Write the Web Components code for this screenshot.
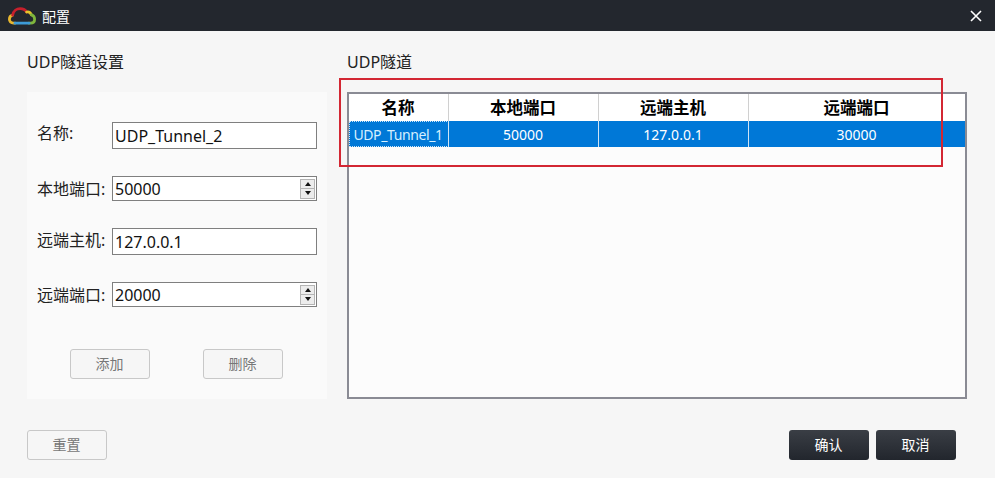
<!DOCTYPE html>
<html lang="zh">
<head>
<meta charset="utf-8">
<title>配置</title>
<style>
  html, body { margin: 0; padding: 0; height: 100%; overflow: hidden; background: #f6f6f6; }
  body { font-family: "Noto Sans", "Noto Sans CJK SC", sans-serif; color: #222; }
</style>
</head>
<body>
<config-dialog>
  <title-bar slot="title">配置</title-bar>

  <section-box slot="left" heading="UDP隧道设置">
    <form-panel>
      <form-row label="名称:" value="UDP_Tunnel_2" height="27" raise="5"></form-row>
      <form-row label="本地端口:" value="50000" height="25" spin></form-row>
      <form-row label="远端主机:" value="127.0.0.1" height="27" raise="3"></form-row>
      <form-row label="远端端口:" value="20000" height="25" spin></form-row>
      <ui-button slot="actions" kind="plain">添加</ui-button>
      <ui-button slot="actions" kind="plain">删除</ui-button>
    </form-panel>
  </section-box>

  <section-box slot="right" heading="UDP隧道">
    <tunnel-table></tunnel-table>
  </section-box>

  <ui-button slot="reset" kind="plain">重置</ui-button>
  <ui-button slot="footer" kind="dark">确认</ui-button>
  <ui-button slot="footer" kind="dark">取消</ui-button>
</config-dialog>

<script>
class ConfigDialog extends HTMLElement {
  constructor() {
    super();
    this.attachShadow({ mode: "open" });
    this.shadowRoot.innerHTML = `
      <style>
        :host { display: flex; flex-direction: column; width: 995px; height: 478px; background: #f6f6f6; }
        .main { display: flex; gap: 20px; padding: 20px 0 0 27px; }
        .left { width: 300px; }
        .right { width: 620px; }
        .bottom { display: flex; justify-content: space-between; padding: 31px 39px 0 27px; }
        .buttons { display: flex; gap: 7px; }
      </style>
      <slot name="title"></slot>
      <div class="main">
        <div class="left"><slot name="left"></slot></div>
        <div class="right"><slot name="right"></slot></div>
      </div>
      <div class="bottom">
        <slot name="reset"></slot>
        <div class="buttons"><slot name="footer"></slot></div>
      </div>
    `;
  }
}

class TitleBar extends HTMLElement {
  constructor() {
    super();
    this.attachShadow({ mode: "open" });
    this.shadowRoot.innerHTML = `
      <style>
        :host { display: flex; align-items: center; height: 31px; background: #23272e; color: #fff; font-size: 14px; padding: 0 13px 0 8px; }
        .logo { width: 28px; height: 18px; margin-right: 6px; }
        .text { flex: 1; }
        .close { width: 12px; height: 12px; }
      </style>
      <svg class="logo" viewBox="0 0 28 18" fill="none" stroke-width="2.8" stroke-linecap="round">
        <path d="M7 16.2H5.5C3 16.2 1.4 14.6 1.4 12.3C1.4 10.2 2.6 8.6 4.6 8.2" stroke="#e7b62f"/>
        <path d="M4.6 8.2C5.4 4 8.6 1.6 12.2 1.6C15 1.6 17.4 2.8 18.6 5" stroke="#c6202c"/>
        <path d="M18.6 5C20.6 4.6 22.6 5.6 23.4 7.8" stroke="#e6c42c"/>
        <path d="M23.4 7.8C25.4 8.4 26.6 10.2 26.6 12.3C26.6 14.6 25 16.2 22.6 16.2H21" stroke="#7fb53c"/>
        <path d="M7 16.2H21" stroke="#3d9bd8"/>
      </svg>
      <span class="text"><slot></slot></span>
      <svg class="close" viewBox="0 0 12 12" stroke="#fff" stroke-width="1.6">
        <path d="M1 1L11 11M11 1L1 11"/>
      </svg>
    `;
  }
}

class SectionBox extends HTMLElement {
  constructor() {
    super();
    this.attachShadow({ mode: "open" });
    this.shadowRoot.innerHTML = `
      <style>
        :host { display: block; }
        h2 { margin: 0 0 19px; font-size: 16px; font-weight: 400; line-height: 22px; color: #222; }
      </style>
      <h2>${this.getAttribute("heading")}</h2>
      <slot></slot>
    `;
  }
}

class FormPanel extends HTMLElement {
  constructor() {
    super();
    this.attachShadow({ mode: "open" });
    this.shadowRoot.innerHTML = `
      <style>
        :host { display: flex; flex-direction: column; box-sizing: border-box; height: 307px; background: #fafafa; padding: 30px 10px 20px; }
        .rows { display: flex; flex-direction: column; gap: 27px; }
        .actions { display: flex; gap: 53px; margin: 42px 0 0 33px; }
      </style>
      <div class="rows"><slot></slot></div>
      <div class="actions"><slot name="actions"></slot></div>
    `;
  }
}

class FormRow extends HTMLElement {
  constructor() {
    super();
    this.attachShadow({ mode: "open" });
    const spin = this.hasAttribute("spin");
    const raise = this.getAttribute("raise") || 0;
    this.shadowRoot.innerHTML = `
      <style>
        :host { display: flex; align-items: center; height: ${this.getAttribute("height")}px; }
        .label { width: 75px; font-size: 16px; line-height: 20px; color: #222; white-space: nowrap; padding-bottom: ${raise}px; }
        .field { display: flex; align-items: center; box-sizing: border-box; width: 205px; height: 100%; background: #fff; border: 1px solid #7f7f7f; padding: 0 1px 0 2px; }
        .value { flex: 1; font-size: 16px; color: #111; white-space: nowrap; }
        .spin { display: flex; flex-direction: column; gap: 1px; box-sizing: border-box; width: 15px; height: 20px; border: 1px solid #b4b4b4; background: #b4b4b4; }
        .spin span { flex: 1; display: flex; align-items: center; justify-content: center; background: #ececec; }
        .spin i { width: 0; height: 0; border: 3px solid transparent; }
        .up { border-bottom: 4px solid #111 !important; border-top: 0 !important; }
        .down { border-top: 4px solid #111 !important; border-bottom: 0 !important; }
      </style>
      <span class="label">${this.getAttribute("label")}</span>
      <div class="field">
        <span class="value">${this.getAttribute("value")}</span>
        ${spin ? `<div class="spin"><span><i class="up"></i></span><span><i class="down"></i></span></div>` : ""}
      </div>
    `;
  }
}

class UiButton extends HTMLElement {
  constructor() {
    super();
    this.attachShadow({ mode: "open" });
    this.shadowRoot.innerHTML = `
      <style>
        :host { display: flex; align-items: center; justify-content: center; box-sizing: border-box; width: 80px; height: 30px; border-radius: 3px; font-size: 14px; padding: 0 1px 2px 0; }
        :host([kind="plain"]) { background: #f6f6f6; border: 1px solid #c8c8c8; color: #777; }
        :host([kind="dark"]) { background: linear-gradient(#3a3e45, #22262d); color: #fff; }
      </style>
      <slot></slot>
    `;
  }
}

class TunnelTable extends HTMLElement {
  constructor() {
    super();
    this.attachShadow({ mode: "open" });
    const head = ["名称", "本地端口", "远端主机", "远端端口"];
    const row = ["UDP_Tunnel_1", "50000", "127.0.0.1", "30000"];
    this.shadowRoot.innerHTML = `
      <style>
        :host { display: block; position: relative; box-sizing: border-box; width: 620px; height: 307px; background: #fcfcfc; border: 2px solid #8a8b94; }
        .grid { display: grid; grid-template-columns: 100px 150px 150px 216px; grid-template-rows: 27px 26px; }
        .cell { display: flex; align-items: center; justify-content: center; box-sizing: border-box; border-right: 1px solid #d0d0d0; white-space: nowrap; }
        .cell:nth-child(4n) { border-right: 0; }
        .th { background: #fff; font-size: 16.5px; font-weight: 700; color: #000; padding: 0 1px 1px 0; }
        .td { background: #0078d7; color: #fff; font-size: 14px; border-right-color: #cfe3f5; padding-right: 1px; }
        .focus { outline: 1px dotted #cfe6f8; outline-offset: -1px; color: #d6f0ff; letter-spacing: -.4px; }
        /* annotation drawn over the table */
        .mark { position: absolute; left: -10px; top: -16px; width: 600px; height: 85px; border: 2px solid #d32733; pointer-events: none; }
      </style>
      <div class="grid">
        ${head.map(t => `<div class="cell th">${t}</div>`).join("")}
        ${row.map((t, i) => `<div class="cell td${i === 0 ? " focus" : ""}">${t}</div>`).join("")}
      </div>
      <div class="mark"></div>
    `;
  }
}

customElements.define("config-dialog", ConfigDialog);
customElements.define("title-bar", TitleBar);
customElements.define("section-box", SectionBox);
customElements.define("form-panel", FormPanel);
customElements.define("form-row", FormRow);
customElements.define("ui-button", UiButton);
customElements.define("tunnel-table", TunnelTable);
</script>
</body>
</html>
